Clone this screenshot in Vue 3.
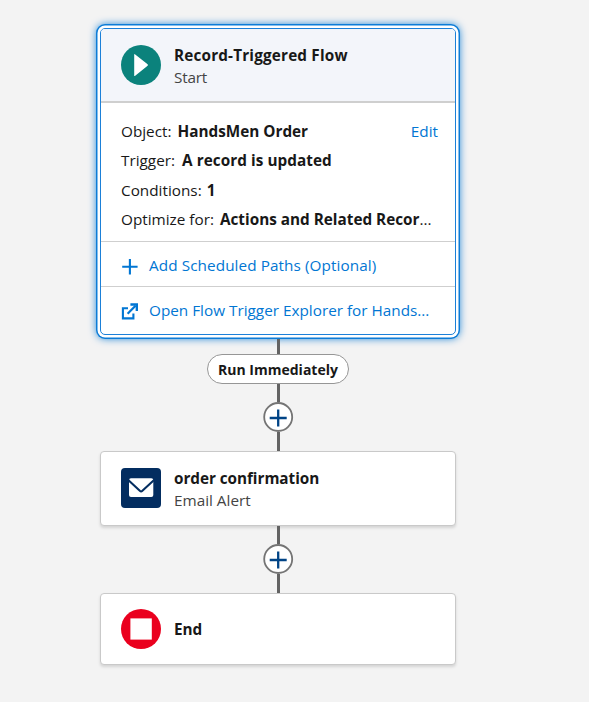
<script setup>
const details = [
  { label: 'Object:', value: 'HandsMen Order', key: 'object', action: 'Edit' },
  { label: 'Trigger:', value: 'A record is updated', key: 'trigger' },
  { label: 'Conditions:', value: '1', key: 'conditions' },
  { label: 'Optimize for:', value: 'Actions and Related Recor', key: 'optimize', cut: true },
]
</script>

<template>
  <main class="canvas">
    <section class="card start">
      <header class="head">
        <svg class="icon" viewBox="0 0 40 40">
          <circle cx="20" cy="20" r="20" fill="#0b827c" />
          <path d="M13.2 9.8Q13.2 8.6 14.2 9.4L26.6 19.3Q27.3 20 26.6 20.7L14.2 30.8Q13.2 31.6 13.2 30.4Z" fill="#fff" />
        </svg>
        <div class="titles">
          <strong class="title t-flow">Record-Triggered Flow</strong>
          <span class="sub s-start">Start</span>
        </div>
      </header>
      <div class="details">
        <div v-for="d in details" :key="d.key" class="row" :class="d.key">
          <span class="label">{{ d.label }}</span>
          <strong class="value">{{ d.value }}</strong>
          <span v-if="d.cut">...</span>
          <a v-if="d.action" class="edit">{{ d.action }}</a>
        </div>
      </div>
      <div class="link">
        <svg class="glyph" viewBox="0 0 17 17"><path d="M8.9 1v15.4M1.2 8.7h15.4" fill="none" stroke="#0176d3" stroke-width="2.1" /></svg>
        <a class="l-paths">Add Scheduled Paths (Optional)</a>
      </div>
      <div class="link">
        <svg class="glyph" viewBox="0 0 17 17">
          <path d="M7 5.2H1.9v10.2h10.5v-4.8" fill="none" stroke="#0176d3" stroke-width="2.1" />
          <path d="M6.6 10.7L14.5 2.8" fill="none" stroke="#0176d3" stroke-width="2.2" />
          <path d="M9.4 1.6h6.5v6.5" fill="none" stroke="#0176d3" stroke-width="2.5" />
        </svg>
        <a class="l-explorer">Open Flow Trigger Explorer for Hands...</a>
      </div>
    </section>

    <i class="line l1"></i>
    <div class="pill"><span>Run Immediately</span></div>
    <i class="line l2"></i>
    <svg class="add" viewBox="0 0 30 30">
      <circle cx="15.2" cy="15" r="14" fill="#fff" stroke="#747474" stroke-width="1.8" />
      <path d="M15.2 7.5v17M6.7 16h17" fill="none" stroke="#014486" stroke-width="2.3" />
    </svg>
    <i class="line l3"></i>

    <section class="card node email">
      <svg class="icon" viewBox="0 0 40 40">
        <rect width="40" height="40" rx="4" fill="#032d60" />
        <rect x="8" y="10.3" width="24.3" height="18.7" rx="2" fill="#fff" />
        <path d="M7.5 12.2L18.8 22.8Q20.1 23.9 21.4 22.8L32.8 12.2" fill="none" stroke="#032d60" stroke-width="2.1" />
      </svg>
      <div class="titles">
        <strong class="title t-order">order confirmation</strong>
        <span class="sub s-email">Email Alert</span>
      </div>
    </section>

    <i class="line l4"></i>
    <svg class="add" viewBox="0 0 30 30">
      <circle cx="15.2" cy="15" r="14" fill="#fff" stroke="#747474" stroke-width="1.8" />
      <path d="M15.2 7.5v17M6.7 16h17" fill="none" stroke="#014486" stroke-width="2.3" />
    </svg>
    <i class="line l5"></i>

    <section class="card node end">
      <svg class="icon" viewBox="0 0 40 40">
        <circle cx="20" cy="20" r="20" fill="#ea001e" />
        <rect x="9.4" y="9.4" width="21.4" height="21.2" fill="#fff" />
      </svg>
      <strong class="title t-end">End</strong>
    </section>
  </main>
</template>

<style>
body { background: #f3f3f3; }
</style>

<style scoped>
.canvas {
  box-sizing: border-box;
  width: 589px;
  height: 702px;
  padding: 28px 133px 0 100px;
  background: #f3f3f3;
  color: #181818;
  font: 15.3px/22px "Open Sans", "Noto Sans", sans-serif;
  display: flex;
  flex-direction: column;
  align-items: center;
}
.card {
  box-sizing: border-box;
  width: 356px;
  flex: none;
  background: #fff;
  border: 1px solid #c9c9c9;
  border-radius: 4px;
  box-shadow: 0 2px 3px rgba(0, 0, 0, .13);
}
.start {
  height: 307px;
  border-color: #1b80d8;
  border-radius: 5px;
  box-shadow: 0 0 0 2.5px #fff, 0 0 0 4px #0d7cd7, 0 0 9px 3px #0176d3;
  overflow: hidden;
}
.head {
  box-sizing: border-box;
  height: 74px;
  padding: 0 20px;
  display: flex;
  align-items: center;
  gap: 13px;
  background: #f3f5fa;
  border-bottom: 2px solid #cfcfcf;
}
.icon { width: 40px; height: 40px; flex: none; }
.titles { display: flex; flex-direction: column; padding-top: 2px; }
.title, .sub { white-space: nowrap; line-height: 22.5px; }
.title { font-weight: 700; }
.t-flow { letter-spacing: .17px; }
.t-order { letter-spacing: -.05px; }
.s-start { letter-spacing: -.2px; }
.sub { color: #444; }
.details {
  box-sizing: border-box;
  height: 139px;
  padding: 14px 17px 0 20px;
  border-bottom: 1px solid #cfcfcf;
}
.row { display: flex; gap: 5px; height: 29.4px; line-height: 29.4px; white-space: nowrap; }
.object { gap: 6px; }
.trigger { gap: 7px; }
.trigger .value { letter-spacing: .06px; }
.optimize { gap: 6px; }
.optimize > span:last-child { margin-left: -6px; }
.edit { margin-left: auto; color: #0176d3; }
.link {
  box-sizing: border-box;
  height: 44px;
  padding: 2px 20px 0;
  display: flex;
  align-items: center;
  gap: 11px;
  color: #0176d3;
  white-space: nowrap;
}
.link a { margin-bottom: 1px; }
.l-paths { letter-spacing: .08px; }
.link + .link { border-top: 1px solid #cfcfcf; height: 46px; }
.glyph { width: 17px; height: 17px; flex: none; margin-top: 2px; }
.line { width: 2.5px; flex: none; background: #636363; margin-left: 1px; }
.l1 { height: 15px; margin-top: 4px; }
.l2 { height: 18px; }
.l3 { height: 19px; }
.l4 { height: 18px; }
.l5 { height: 19px; }
.pill {
  box-sizing: border-box;
  width: 142px;
  height: 30px;
  flex: none;
  border: 1px solid #969696;
  border-radius: 15px;
  background: #fff;
  display: flex;
  justify-content: center;
  align-items: center;
  padding-top: 1px;
  font-weight: 700;
  font-size: 14px;
  white-space: nowrap;
}
.add { width: 30px; height: 30px; flex: none; overflow: visible; }
.node { display: flex; align-items: center; gap: 13px; padding: 0 20px; }
.email { height: 75px; padding-bottom: 1px; }
.end { height: 72px; }
</style>
